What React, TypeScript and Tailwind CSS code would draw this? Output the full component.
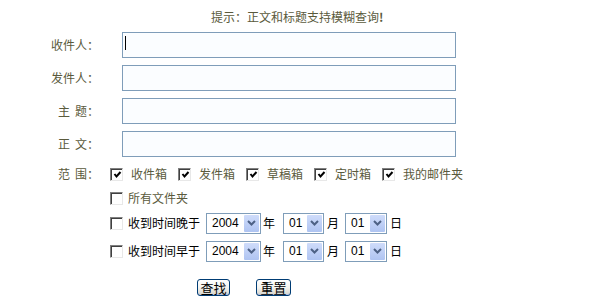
import React from "react";

const cjk = { fontFamily: '"Noto Sans CJK SC", "Noto Sans", sans-serif' };
const latin = { fontFamily: 'Tahoma, "Liberation Sans", "DejaVu Sans", sans-serif' };

function Check({ checked }: { checked?: boolean }) {
  return (
    <span className="box-border flex h-[13px] w-[13px] shrink-0 items-center justify-center border-t border-l border-b border-r border-t-[#808080] border-l-[#808080] border-b-[#e8e8e8] border-r-[#e8e8e8] bg-white shadow-[inset_1px_1px_0_#404040]">
      {checked && (
        <svg width="9" height="9" viewBox="0 0 9 9" className="ml-[1px] mt-[1px]">
          <polyline points="1.5,4 3.5,6.5 7.5,2" fill="none" stroke="#000" strokeWidth="2" />
        </svg>
      )}
    </span>
  );
}

function Select({ value, w }: { value: string; w: string }) {
  return (
    <div className={`box-border flex h-[21px] items-stretch border border-[#7f9db9] bg-white p-[1px] ${w}`}>
      <span className="flex flex-1 items-center pl-[4px] text-[12px] text-black" style={latin}>
        {value}
      </span>
      <span className="flex w-[15px] items-center justify-center rounded-[1px] bg-gradient-to-b from-[#cfdcfa] to-[#afc4f2]">
        <svg width="9" height="6" viewBox="0 0 9 6">
          <polyline points="1,1 4.5,4.5 8,1" fill="none" stroke="#4d6185" strokeWidth="2" />
        </svg>
      </span>
    </div>
  );
}

function Label({ children }: { children: React.ReactNode }) {
  return (
    <div className="flex w-[110px] shrink-0 justify-end pr-[11px] text-[12px] leading-[14px] text-[#5a5a3c]">
      {children}
    </div>
  );
}

function InputRow({ label, caret }: { label: React.ReactNode; caret?: boolean }) {
  return (
    <div className="flex h-[26px] items-center">
      <Label>{label}</Label>
      <div className="ml-[12px] box-border flex h-[26px] w-[334px] items-start border border-[#7f9db9] bg-[#fbfdff] pl-[2px] pt-[3px]">
        {caret && <span className="h-[14px] w-[1px] bg-black" />}
      </div>
    </div>
  );
}

function DateRow({ text }: { text: string }) {
  return (
    <div className="flex h-[22px] items-center pl-[110px] text-[12px] leading-[14px] text-black">
      <Check />
      <span className="ml-[5px] w-[72px]">{text}</span>
      <div className="ml-[6px]">
        <Select value="2004" w="w-[55px]" />
      </div>
      <span className="ml-[2px] w-[12px]">年</span>
      <div className="ml-[8px]">
        <Select value="01" w="w-[41px]" />
      </div>
      <span className="ml-[3px] w-[12px]">月</span>
      <div className="ml-[6px]">
        <Select value="01" w="w-[42px]" />
      </div>
      <span className="ml-[3px] w-[12px]">日</span>
    </div>
  );
}

function Btn({ children, w }: { children: React.ReactNode; w: string }) {
  return (
    <div
      className={`box-border flex h-[17px] items-center justify-center rounded-[3px] border border-[#003c74] bg-gradient-to-b from-white via-[#f4f4f0] to-[#d6d3ca] text-[13px] leading-[13px] text-black shadow-[inset_0_-1px_0_#b0c0e0] ${w}`}
    >
      {children}
    </div>
  );
}

export default function App() {
  const ranges = ["收件箱", "发件箱", "草稿箱", "定时箱", "我的邮件夹"];
  return (
    <div className="flex h-[301px] w-[600px] flex-col bg-white" style={cjk}>
      <div className="mt-[10px] h-[14px] pl-[211px] text-[12px] leading-[14px] text-[#5a5a3c]">
        提示：正文和标题支持模糊查询<span className="font-bold">!</span>
      </div>
      <div className="mt-[8px] flex flex-col gap-[7px]">
        <InputRow label="收件人：" caret />
        <InputRow label="发件人：" />
        <InputRow
          label={
            <>
              <span>主</span>
              <span className="ml-[5px]">题：</span>
            </>
          }
        />
        <InputRow
          label={
            <>
              <span>正</span>
              <span className="ml-[5px]">文：</span>
            </>
          }
        />
      </div>
      <div className="mt-[7px] flex h-[20px] items-center">
        <Label>
          <span>范</span>
          <span className="ml-[5px]">围：</span>
        </Label>
        <div className="flex items-center gap-[11px] text-[12px] leading-[14px] text-[#5a5a3c]">
          {ranges.map((r) => (
            <div key={r} className="flex items-center">
              <Check checked />
              <span className="ml-[8px]">{r}</span>
            </div>
          ))}
        </div>
      </div>
      <div className="mt-[4px] flex h-[20px] items-center pl-[110px] text-[12px] leading-[14px] text-[#5a5a3c]">
        <Check />
        <span className="ml-[5px]">所有文件夹</span>
      </div>
      <div className="mt-[4px]">
        <DateRow text="收到时间晚于" />
      </div>
      <div className="mt-[6px]">
        <DateRow text="收到时间早于" />
      </div>
      <div className="mt-[17px] flex pl-[197px]">
        <Btn w="w-[33px]">查找</Btn>
        <div className="ml-[26px]">
          <Btn w="w-[35px]">重置</Btn>
        </div>
      </div>
    </div>
  );
}
